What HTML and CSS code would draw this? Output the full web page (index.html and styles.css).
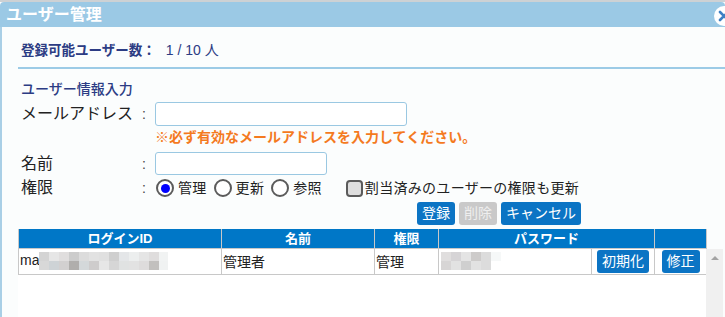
FILE: index.html
```html
<!DOCTYPE html>
<html lang="ja">
<head>
  <meta charset="UTF-8">
  <title>ユーザー管理</title>
  <link rel="stylesheet" href="styles.css">
</head>
<body>
  <div class="dialog">
    <div class="titlebar">
      ユーザー管理
      <span class="close">
        <svg width="20" height="20" viewBox="0 0 20 20"><path d="M6 6 L14 14 M14 6 L6 14" stroke="#3d7fc4" stroke-width="2.6" stroke-linecap="round"/></svg>
      </span>
    </div>

    <div class="content">
      <p class="count"><b>登録可能ユーザー数：</b><span class="count-num">1 / 10 人</span></p>
      <hr class="rule">

      <h3 class="section-title">ユーザー情報入力</h3>
      <div class="user-form">
        <span class="field-label">メールアドレス</span>
        <span class="colon">:</span>
        <input class="text-input" type="text">

        <span class="notice">※必ず有効なメールアドレスを入力してください。</span>

        <span class="field-label">名前</span>
        <span class="colon">:</span>
        <input class="text-input short" type="text">

        <span class="field-label">権限</span>
        <span class="colon">:</span>
        <div class="choice-row">
          <label class="choice"><input type="radio" name="role" checked> 管理</label>
          <label class="choice"><input type="radio" name="role"> 更新</label>
          <label class="choice"><input type="radio" name="role"> 参照</label>
          <label class="choice check"><input type="checkbox"> 割当済みのユーザーの権限も更新</label>
        </div>

        <div class="form-actions">
          <button class="btn">登録</button>
          <button class="btn" disabled>削除</button>
          <button class="btn">キャンセル</button>
        </div>
      </div>

      <table class="user-table head">
        <colgroup>
          <col class="c-id"><col class="c-name"><col class="c-role"><col class="c-pw"><col class="c-reset"><col class="c-edit">
        </colgroup>
        <tr>
          <th>ログインID</th>
          <th>名前</th>
          <th>権限</th>
          <th colspan="2">パスワード</th>
          <th></th>
        </tr>
      </table>

      <div class="list-body">
        <div class="rows">
          <table class="user-table">
            <colgroup>
              <col class="c-id"><col class="c-name"><col class="c-role"><col class="c-pw"><col class="c-reset"><col class="c-edit">
            </colgroup>
            <tr>
              <td>ma<span class="mask mask-id"></span></td>
              <td>管理者</td>
              <td>管理</td>
              <td><span class="mask mask-pw"></span></td>
              <td class="center"><button class="btn">初期化</button></td>
              <td class="center"><button class="btn">修正</button></td>
            </tr>
          </table>
        </div>
        <div class="scroll-track"><span class="arrow-up"></span></div>
      </div>
    </div>
  </div>
</body>
</html>
```

FILE: styles.css
```css
* {
  margin: 0;
  padding: 0;
  box-sizing: border-box;
  font-family: "Liberation Sans", "Noto Sans CJK JP", sans-serif;
}

body {
  width: 725px;
  height: 317px;
  overflow: hidden;
  background-color: #cdd1d4;
  padding-top: 2px;
}

.dialog {
  position: relative;
  height: 315px;
  background-color: #fbfdfd;
}

.titlebar {
  position: relative;
  height: 25px;
  line-height: 25px;
  padding-left: 6px;
  background-color: #9bc9e5;
  color: #fff;
  font-size: 16px;
  font-weight: bold;
  border-radius: 4px 4px 0 0;
}

.close {
  position: absolute;
  left: 714px;
  top: 4px;
  width: 20px;
  height: 20px;
  border-radius: 50%;
  background: #fff;
  display: flex;
}

.content {
  height: 290px;
  border-left: 2px solid #a9cfe6;
  padding: 13px 0 0 16px;
}

.count {
  padding-left: 3px;
  font-size: 13.5px;
  line-height: 20px;
  color: #2c3c84;
}

.count-num {
  margin-left: 10px;
  font-size: 14px;
}

.rule {
  border: none;
  border-top: 2px solid #9ccbe6;
  margin-top: 6px;
}

.section-title {
  margin: 11px 0 2px;
  padding-left: 3px;
  font-size: 14px;
  font-weight: 500;
  line-height: 18px;
  color: #2c3c84;
}

.user-form {
  display: grid;
  width: fit-content;
  grid-template-columns: 122px 15px auto;
  grid-template-rows: 28px 22px 27px 22px 28px;
  align-items: center;
}

.field-label {
  padding-left: 3px;
  font-size: 16px;
  line-height: 20px;
  color: #222;
}

.colon {
  padding-left: 2px;
  font-size: 14px;
  color: #444;
}

.text-input {
  width: 252px;
  height: 24px;
  border: 1px solid #9ac8e2;
  border-radius: 3px;
  background: #fff;
}

.text-input.short {
  width: 172px;
  height: 23px;
}

.notice {
  grid-column: 3;
  align-self: start;
  font-size: 14px;
  line-height: 18px;
  font-weight: bold;
  color: #f47a1f;
}

.choice-row {
  display: flex;
  align-items: center;
  font-size: 14px;
  line-height: 18px;
  letter-spacing: 0.3px;
  color: #222;
}

.choice {
  display: flex;
  align-items: center;
  gap: 4px;
  margin-right: 6px;
}

.choice.check {
  margin-left: 17px;
  margin-right: 0;
  gap: 2px;
}

.choice input {
  appearance: none;
  width: 18px;
  height: 18px;
  margin-left: 1px;
  border: 2px solid #5b5b5b;
  border-radius: 50%;
  background: #fff;
  display: flex;
  align-items: center;
  justify-content: center;
}

.choice input:checked::after {
  content: "";
  width: 9px;
  height: 9px;
  border-radius: 50%;
  background: #0000ff;
}

.choice input[type="checkbox"] {
  width: 17px;
  height: 17px;
  border-radius: 4px;
  background: #dedede;
}

.form-actions {
  grid-column: 3;
  justify-self: end;
  display: flex;
  gap: 4px;
  margin-right: -2px;
}

.btn {
  height: 23px;
  padding: 0 5px;
  border: none;
  border-radius: 3px;
  background-color: #0b74c4;
  color: #fff;
  font-size: 14px;
  line-height: 23px;
  cursor: pointer;
}

.btn:disabled {
  background-color: #c9c9c9;
  color: #eee;
}

.user-table {
  width: 688px;
  table-layout: fixed;
  border-collapse: collapse;
}

.user-table.head {
  margin-top: 2px;
}

.c-id { width: 203px; }
.c-name { width: 153px; }
.c-role { width: 64px; }
.c-pw { width: 153px; }
.c-reset { width: 63px; }
.c-edit { width: 52px; }

.user-table th {
  height: 19px;
  background-color: #0077c7;
  color: #fff;
  font-size: 13px;
  font-weight: bold;
  line-height: 17px;
  border: 1px solid #c8c8c8;
  border-top: none;
}

.user-table td {
  height: 26px;
  padding-left: 1px;
  border: 1px solid #c8c8c8;
  border-top: none;
  font-size: 14px;
  color: #222;
  white-space: nowrap;
}

.user-table td.center {
  text-align: center;
  padding-left: 0;
}

.mask {
  display: inline-block;
  height: 18px;
  vertical-align: middle;
  background-repeat: no-repeat;
  background-size: 100% 9px;
  background-position: 0 0, 0 9px;
}

.mask-id {
  width: 129px;
  background-image:
    linear-gradient(to right, #d4d4d4 0 10px, #e6e6e6 10px 20px, #e0dede 20px 30px, #cccccc 30px 40px, #dcdcdc 40px 50px, #e2e2e2 50px 60px, #e0e0e0 60px 70px, #cfcfcf 70px 80px, #e4e6e8 80px 90px, #eceeee 90px 100px, #e5e5e5 100px 110px, #dfdddd 110px 120px, #f1f3f3 120px),
    linear-gradient(to right, #d8d8d8 0 10px, #ced3d6 10px 20px, #d2d0d0 20px 30px, #b0aeac 30px 40px, #d4d8da 40px 50px, #cecccc 50px 60px, #e6e6e6 60px 70px, #d6d6d6 70px 80px, #e0e2e2 80px 90px, #e2e2e2 90px 100px, #dedcdc 100px 110px, #c2c0be 110px 120px, #f0f2f2 120px);
}

.mask-pw {
  width: 60px;
  margin-left: 1px;
  background-image:
    linear-gradient(to right, #e0dede 0 10px, #d6d4d6 10px 20px, #e4e4e4 20px 30px, #cdcbca 30px 40px, #dcdcdc 40px 50px, #f6f8f8 50px),
    linear-gradient(to right, #d7d5d5 0 10px, #e2e2e2 10px 20px, #cfcfcf 20px 30px, #e2e2e2 30px 40px, #dcdcdc 40px 50px, #fff 50px);
}

.list-body {
  display: flex;
  height: 80px;
}

.rows {
  width: 688px;
  background: #fff;
}

.scroll-track {
  width: 17px;
  background: #f0f0f0;
  display: flex;
  justify-content: center;
  padding-top: 7px;
}

.arrow-up {
  width: 0;
  height: 0;
  border-left: 4px solid transparent;
  border-right: 4px solid transparent;
  border-bottom: 4px solid #a3a3a3;
}
```
